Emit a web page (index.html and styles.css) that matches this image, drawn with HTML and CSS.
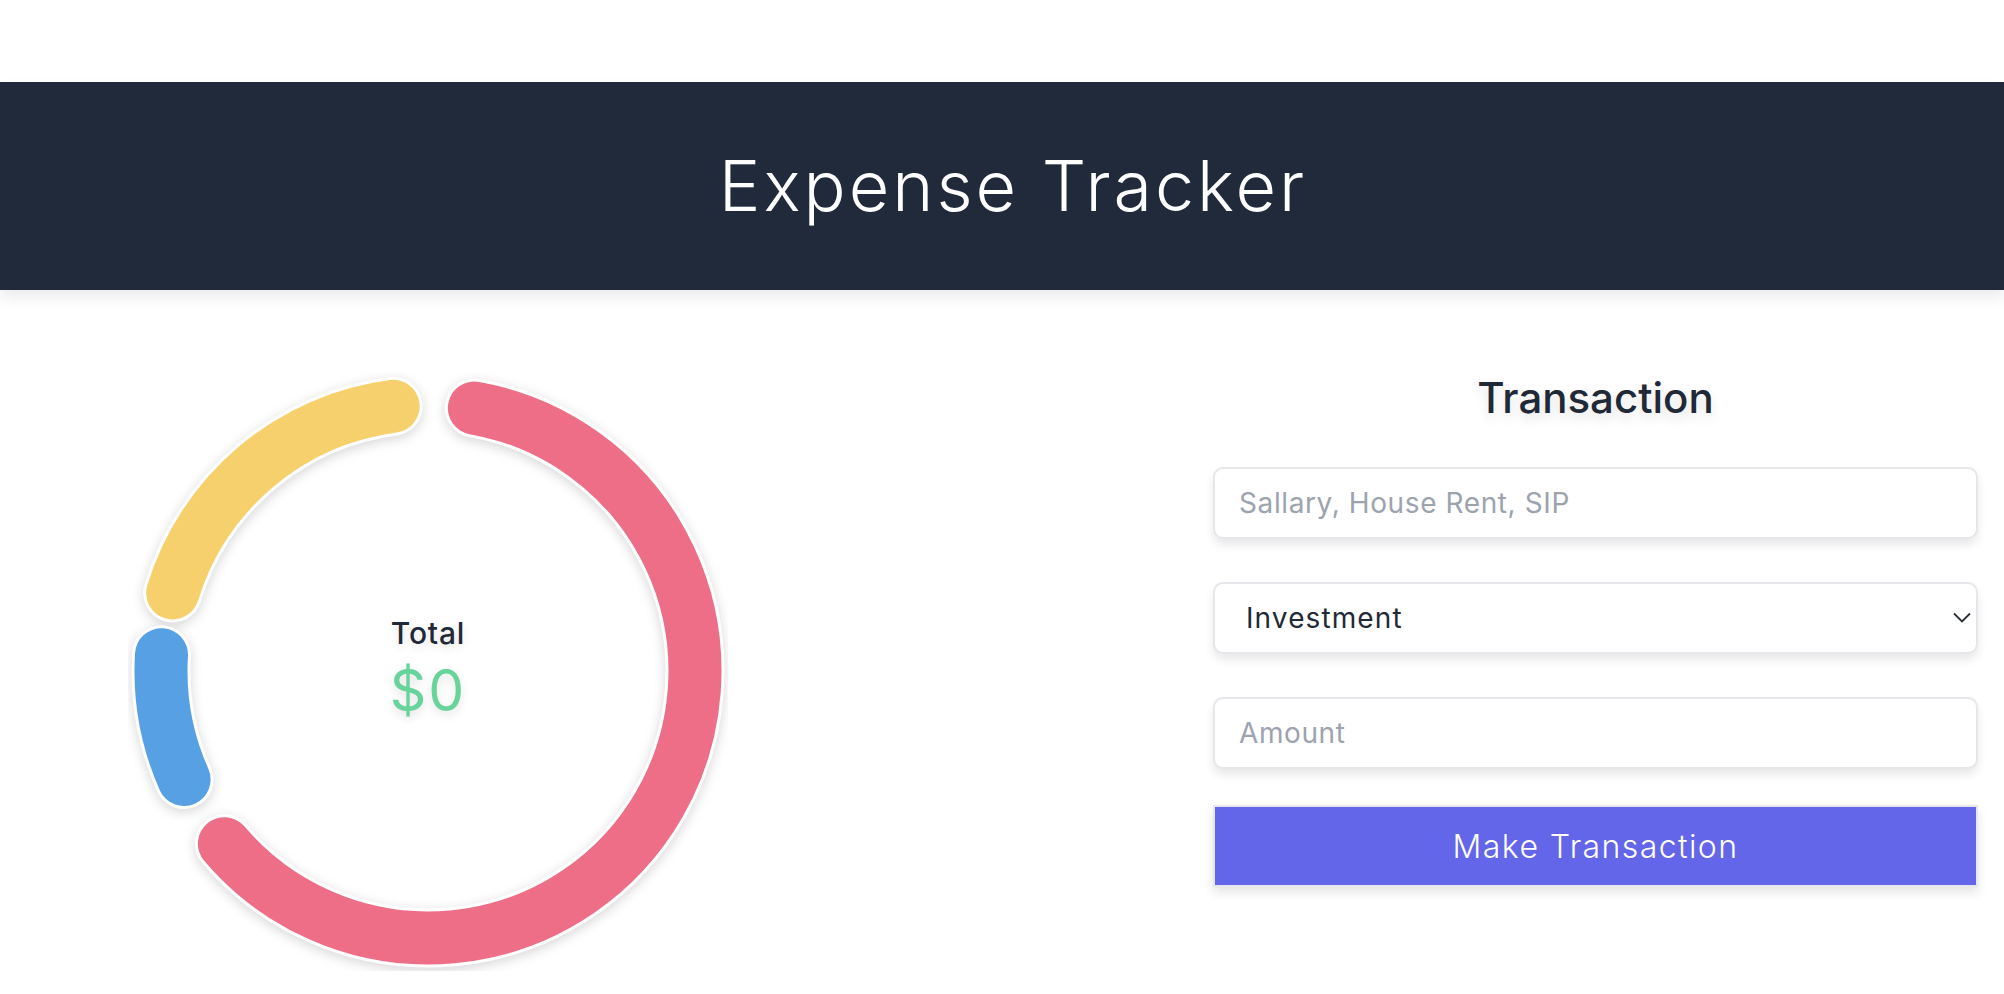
FILE: index.html
```html
<!DOCTYPE html>
<html lang="en">
<head>
<meta charset="utf-8">
<title>Expense Tracker</title>
<link rel="stylesheet" href="styles.css">
</head>
<body>
<div class="page">
  <header class="app-header">
    <h1 class="app-title">Expense Tracker</h1>
  </header>
  <main class="main">
    <section class="chart">
      <svg class="chart-svg" width="600" height="600" viewBox="0 0 600 600">
        <g class="ring">
          <path class="seg-border" d="M346.36 37.05 A267 267 0 1 1 96.36 472.7"/>
          <path class="seg seg-pink" d="M346.36 37.05 A267 267 0 1 1 96.36 472.7"/>
          <path class="seg-border" d="M56.1 408.6 A267 267 0 0 1 33.5 283.7"/>
          <path class="seg seg-blue" d="M56.1 408.6 A267 267 0 0 1 33.5 283.7"/>
          <path class="seg-border" d="M44.67 221.94 A267 267 0 0 1 265.15 35.29"/>
          <path class="seg seg-yellow" d="M44.67 221.94 A267 267 0 0 1 265.15 35.29"/>
        </g>
      </svg>
      <div class="chart-center">
        <span class="total-label">Total</span>
        <span class="total-value">$0</span>
      </div>
    </section>
    <section class="form">
      <h2 class="form-title">Transaction</h2>
      <input class="field" type="text" placeholder="Sallary, House Rent, SIP">
      <div class="select-wrap">
        <select class="field select">
          <option>Investment</option>
          <option>Expense</option>
          <option>Savings</option>
        </select>
        <svg class="chevron" width="18" height="11" viewBox="0 0 18 11"><path d="M1 1.5 L9 9.5 L17 1.5" fill="none" stroke="#2b2f38" stroke-width="1.8"/></svg>
      </div>
      <input class="field" type="text" placeholder="Amount">
      <button class="submit" type="button">Make Transaction</button>
    </section>
  </main>
</div>
</body>
</html>
```

FILE: styles.css
```css
* { box-sizing: border-box; }

html, body {
  margin: 0;
  padding: 0;
  background: #ffffff;
  font-family: "Inter", "Noto Sans", sans-serif;
  color: #1f2937;
}

.page {
  padding-top: 82px;
  min-height: 994px;
}

.app-header {
  height: 208px;
  padding-left: 22px;
  background: #212a3b;
  display: flex;
  align-items: center;
  justify-content: center;
  box-shadow: 0 8px 14px rgba(0, 0, 0, 0.08);
}

.app-title {
  margin: 0;
  color: #ffffff;
  font-weight: 300;
  font-size: 70px;
  line-height: 1;
  letter-spacing: 3px;
}

.main {
  display: flex;
  justify-content: space-between;
  align-items: flex-start;
  padding: 81px 26px 0 128px;
}

.chart {
  position: relative;
  width: 600px;
  height: 600px;
}

.chart-svg {
  display: block;
}

.ring {
  filter: drop-shadow(0 3px 6px rgba(0, 0, 0, 0.16));
}

.seg-border {
  fill: none;
  stroke: #ffffff;
  stroke-width: 59;
  stroke-linecap: round;
}

.seg {
  fill: none;
  stroke-width: 53;
  stroke-linecap: round;
}

.seg-pink { stroke: #ee6e88; }
.seg-blue { stroke: #58a0e4; }
.seg-yellow { stroke: #f7d06e; }

.chart-center {
  position: absolute;
  inset: 0;
  display: flex;
  flex-direction: column;
  align-items: center;
  justify-content: center;
  padding-bottom: 6px;
}

.total-label {
  font-size: 30px;
  line-height: 36px;
  font-weight: 500;
  letter-spacing: 0.8px;
  color: #1f2937;
  text-shadow: 0 4px 10px rgba(0, 0, 0, 0.12);
}

.total-value {
  margin-top: 10px;
  font-size: 57px;
  line-height: 60px;
  font-weight: 400;
  letter-spacing: 2px;
  color: #68d39a;
  text-shadow: 0 4px 10px rgba(0, 0, 0, 0.12);
}

.form {
  width: 765px;
  display: flex;
  flex-direction: column;
  padding-top: 2px;
}

.form-title {
  margin: 0 0 44px;
  text-align: center;
  font-size: 42px;
  line-height: 50px;
  font-weight: 500;
  color: #1f2937;
  text-shadow: 0 6px 12px rgba(0, 0, 0, 0.12);
}

.field {
  display: block;
  width: 100%;
  height: 72px;
  margin: 0 0 43px;
  padding: 0 24px;
  border: 2px solid #e6e7ea;
  border-radius: 10px;
  background: #ffffff;
  box-shadow: 0 6px 10px rgba(0, 0, 0, 0.09);
  font-family: "Inter", "Noto Sans", sans-serif;
  font-size: 28px;
  font-weight: 400;
  letter-spacing: 0.6px;
  color: #1f2937;
  outline: none;
}

.field::placeholder {
  color: #9ca3af;
}

.select-wrap {
  position: relative;
}

.select {
  appearance: none;
  -webkit-appearance: none;
  padding-left: 31px;
  letter-spacing: 1.1px;
  color: #1f2937;
}

.chevron {
  position: absolute;
  right: 7px;
  top: 30px;
}

.form > .field:nth-of-type(2) {
  margin-bottom: 36px;
}

.submit {
  display: block;
  width: 100%;
  height: 82px;
  border: 2px solid #e6e7ea;
  background: #6366e8;
  color: #ffffff;
  font-family: "Inter", "Noto Sans", sans-serif;
  font-size: 32px;
  font-weight: 300;
  letter-spacing: 1.4px;
  box-shadow: 0 6px 10px rgba(0, 0, 0, 0.1);
  cursor: pointer;
}
```
